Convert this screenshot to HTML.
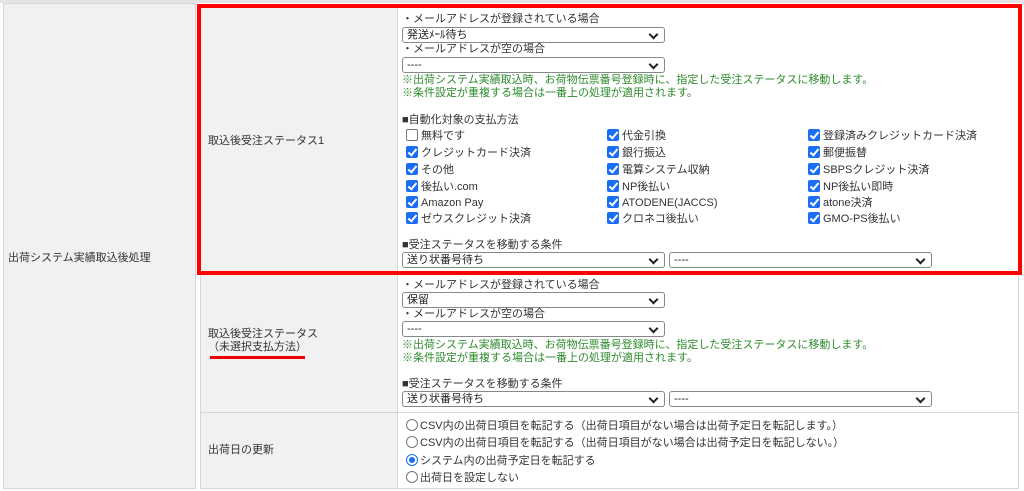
<!DOCTYPE html>
<html><head><meta charset="utf-8"><style>
*{margin:0;padding:0;box-sizing:border-box}
body{width:1024px;height:491px;background:#fff;position:relative;overflow:hidden;font-family:"Liberation Sans","Noto Sans CJK JP",sans-serif;font-size:11px;color:#333}
.a{position:absolute;white-space:nowrap;line-height:13px}
.g{color:#2e8b2e}
.sel{position:absolute;height:16px;border:1px solid #888;border-radius:3px;background:#fff;font-size:11px;line-height:14px;padding-left:4px;color:#222}
.sel:after{content:"";position:absolute;right:7px;top:3px;width:5px;height:5px;border-right:2px solid #222;border-bottom:2px solid #222;transform:rotate(45deg)}
.cb{position:absolute;width:12px;height:12px;border-radius:2px;background:#1a6ef5}
.cb:after{content:"";position:absolute;left:4px;top:1px;width:3px;height:7px;border-right:2px solid #fff;border-bottom:2px solid #fff;transform:rotate(40deg)}
.cb.u{background:#fff;border:1px solid #777}.cb.u:after{display:none}
.r{position:absolute;width:12px;height:12px;border-radius:50%;border:1px solid #777;background:#fff}
.r.on{border:1px solid #1a6ef5}.r.on:after{content:"";position:absolute;left:2px;top:2px;width:6px;height:6px;border-radius:50%;background:#1a6ef5}
.l{margin-top:2px}
</style></head><body>
<div style="position:absolute;left:0;top:0;width:1024px;height:3px;background:#e4e4e4"></div>
<div style="position:absolute;left:3px;top:3px;width:193px;height:486px;background:#f0f1f0;border:1px solid #d6d6d6"></div>
<div style="position:absolute;left:200px;top:6px;width:198px;height:483px;background:#f0f1f0;border:1px solid #d6d6d6"></div>
<div style="position:absolute;left:397px;top:6px;width:622px;height:483px;border:1px solid #d6d6d6"></div>
<div style="position:absolute;left:200px;top:274px;width:819px;height:1px;background:#d6d6d6"></div>
<div style="position:absolute;left:200px;top:412px;width:819px;height:1px;background:#d6d6d6"></div>
<div style="position:absolute;left:197px;top:4px;width:825px;height:271px;border:4px solid #f00"></div>

<div class="a" style="left:8px;top:252px">出荷システム実績取込後処理</div>
<div class="a" style="left:208px;top:135px">取込後受注ステータス1</div>
<div class="a" style="left:208px;top:328px">取込後受注ステータス</div>
<div class="a" style="left:208px;top:341px">（未選択支払方法）</div>
<div style="position:absolute;left:210px;top:356px;width:95px;height:3px;background:#e00"></div>
<div class="a" style="left:208px;top:444px">出荷日の更新</div>

<div class="a" style="left:402px;top:13px">・メールアドレスが登録されている場合</div>
<div class="sel" style="left:402px;top:27px;width:263px">発送ﾒｰﾙ待ち</div>
<div class="a" style="left:402px;top:43px">・メールアドレスが空の場合</div>
<div class="sel" style="left:402px;top:57px;width:263px">----</div>
<div class="a g" style="left:402px;top:74px">※出荷システム実績取込時、お荷物伝票番号登録時に、指定した受注ステータスに移動します。</div>
<div class="a g" style="left:402px;top:87px">※条件設定が重複する場合は一番上の処理が適用されます。</div>
<div class="a" style="left:402px;top:114px">■自動化対象の支払方法</div>

<div class="cb u" style="left:406px;top:129px"></div><div class="a l" style="left:421px;top:128px">無料です</div>
<div class="cb" style="left:406px;top:146px"></div><div class="a l" style="left:421px;top:145px">クレジットカード決済</div>
<div class="cb" style="left:406px;top:163px"></div><div class="a l" style="left:421px;top:162px">その他</div>
<div class="cb" style="left:406px;top:180px"></div><div class="a l" style="left:421px;top:179px">後払い.com</div>
<div class="cb" style="left:406px;top:196px"></div><div class="a l" style="left:421px;top:195px">Amazon Pay</div>
<div class="cb" style="left:406px;top:212px"></div><div class="a l" style="left:421px;top:211px">ゼウスクレジット決済</div>

<div class="cb" style="left:607px;top:129px"></div><div class="a l" style="left:622px;top:128px">代金引換</div>
<div class="cb" style="left:607px;top:146px"></div><div class="a l" style="left:622px;top:145px">銀行振込</div>
<div class="cb" style="left:607px;top:163px"></div><div class="a l" style="left:622px;top:162px">電算システム収納</div>
<div class="cb" style="left:607px;top:180px"></div><div class="a l" style="left:622px;top:179px">NP後払い</div>
<div class="cb" style="left:607px;top:196px"></div><div class="a l" style="left:622px;top:195px">ATODENE(JACCS)</div>
<div class="cb" style="left:607px;top:212px"></div><div class="a l" style="left:622px;top:211px">クロネコ後払い</div>

<div class="cb" style="left:808px;top:129px"></div><div class="a l" style="left:823px;top:128px">登録済みクレジットカード決済</div>
<div class="cb" style="left:808px;top:146px"></div><div class="a l" style="left:823px;top:145px">郵便振替</div>
<div class="cb" style="left:808px;top:163px"></div><div class="a l" style="left:823px;top:162px">SBPSクレジット決済</div>
<div class="cb" style="left:808px;top:180px"></div><div class="a l" style="left:823px;top:179px">NP後払い即時</div>
<div class="cb" style="left:808px;top:196px"></div><div class="a l" style="left:823px;top:195px">atone決済</div>
<div class="cb" style="left:808px;top:212px"></div><div class="a l" style="left:823px;top:211px">GMO-PS後払い</div>

<div class="a" style="left:402px;top:239px">■受注ステータスを移動する条件</div>
<div class="sel" style="left:402px;top:252px;width:263px">送り状番号待ち</div>
<div class="sel" style="left:669px;top:252px;width:263px">----</div>

<div class="a" style="left:402px;top:279px">・メールアドレスが登録されている場合</div>
<div class="sel" style="left:402px;top:292px;width:263px">保留</div>
<div class="a" style="left:402px;top:308px">・メールアドレスが空の場合</div>
<div class="sel" style="left:402px;top:321px;width:263px">----</div>
<div class="a g" style="left:402px;top:339px">※出荷システム実績取込時、お荷物伝票番号登録時に、指定した受注ステータスに移動します。</div>
<div class="a g" style="left:402px;top:352px">※条件設定が重複する場合は一番上の処理が適用されます。</div>
<div class="a" style="left:402px;top:378px">■受注ステータスを移動する条件</div>
<div class="sel" style="left:402px;top:391px;width:263px">送り状番号待ち</div>
<div class="sel" style="left:669px;top:391px;width:263px">----</div>

<div class="r" style="left:406px;top:419px"></div><div class="a l" style="left:420px;top:418px">CSV内の出荷日項目を転記する（出荷日項目がない場合は出荷予定日を転記します。）</div>
<div class="r" style="left:406px;top:436px"></div><div class="a l" style="left:420px;top:435px">CSV内の出荷日項目を転記する（出荷日項目がない場合は出荷予定日を転記しない。）</div>
<div class="r on" style="left:406px;top:454px"></div><div class="a l" style="left:420px;top:453px">システム内の出荷予定日を転記する</div>
<div class="r" style="left:406px;top:471px"></div><div class="a l" style="left:420px;top:470px">出荷日を設定しない</div>
</body></html>
